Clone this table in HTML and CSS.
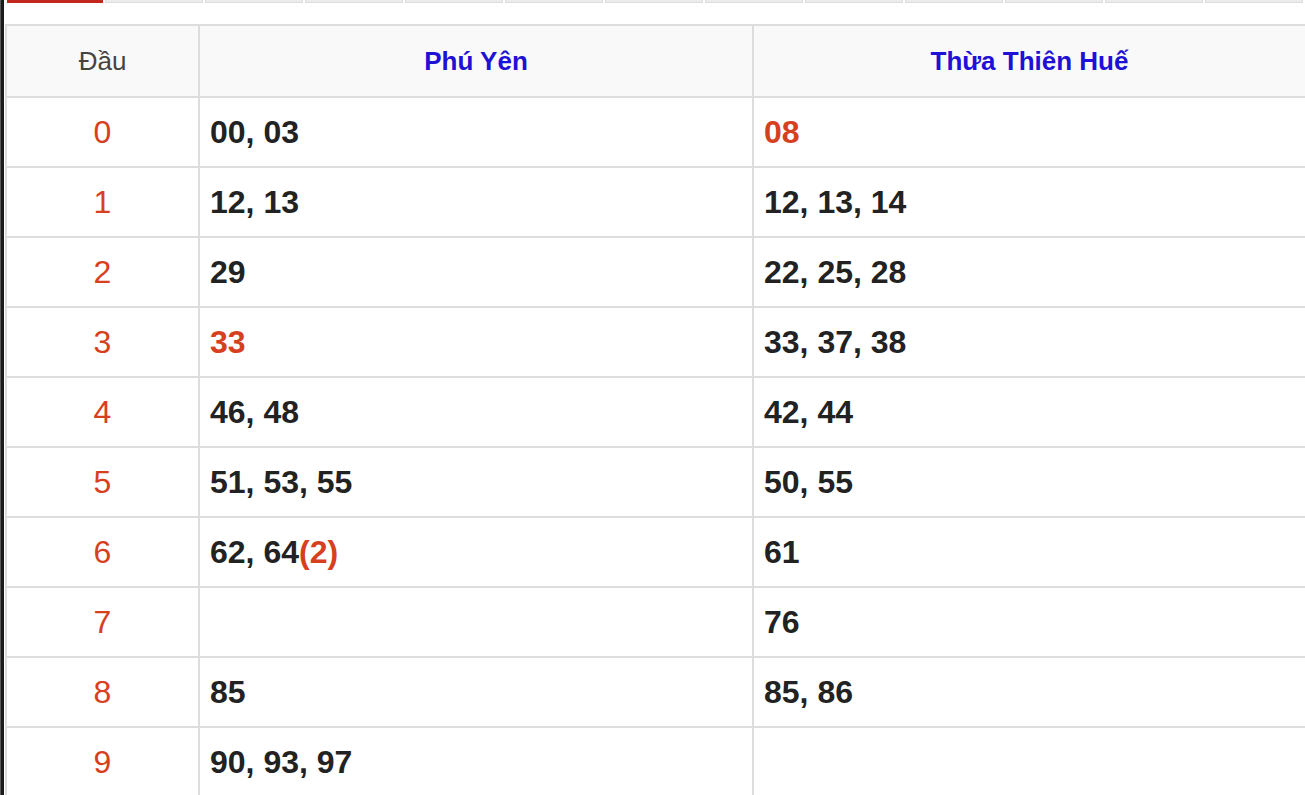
FILE: index.html
```html
<!DOCTYPE html>
<html lang="vi">
<head>
<meta charset="utf-8">
<title>Lô tô đầu</title>
<link rel="stylesheet" href="styles.css">
</head>
<body>
<div class="frame">
  <div class="edge"></div>
  <div class="main">
    <div class="tabs">
      <span class="tab active"></span>
      <span class="tab"></span>
      <span class="tab"></span>
      <span class="tab"></span>
      <span class="tab"></span>
      <span class="tab"></span>
      <span class="tab"></span>
      <span class="tab"></span>
      <span class="tab"></span>
      <span class="tab"></span>
      <span class="tab"></span>
      <span class="tab"></span>
      <span class="tab"></span>
    </div>
    <table class="loto">
      <thead>
        <tr>
          <th class="c-head">Đầu</th>
          <th class="c-prov">Phú Yên</th>
          <th class="c-prov c-last">Thừa Thiên Huế</th>
        </tr>
      </thead>
      <tbody>
        <tr><td class="c-head">0</td><td class="c-num">00, 03</td><td class="c-num"><span class="hl">08</span></td></tr>
        <tr><td class="c-head">1</td><td class="c-num">12, 13</td><td class="c-num">12, 13, 14</td></tr>
        <tr><td class="c-head">2</td><td class="c-num">29</td><td class="c-num">22, 25, 28</td></tr>
        <tr><td class="c-head">3</td><td class="c-num"><span class="hl">33</span></td><td class="c-num">33, 37, 38</td></tr>
        <tr><td class="c-head">4</td><td class="c-num">46, 48</td><td class="c-num">42, 44</td></tr>
        <tr><td class="c-head">5</td><td class="c-num">51, 53, 55</td><td class="c-num">50, 55</td></tr>
        <tr><td class="c-head">6</td><td class="c-num">62, 64<span class="hl">(2)</span></td><td class="c-num">61</td></tr>
        <tr><td class="c-head">7</td><td class="c-num"></td><td class="c-num">76</td></tr>
        <tr><td class="c-head">8</td><td class="c-num">85</td><td class="c-num">85, 86</td></tr>
        <tr><td class="c-head">9</td><td class="c-num">90, 93, 97</td><td class="c-num"></td></tr>
      </tbody>
    </table>
  </div>
</div>
</body>
</html>
```

FILE: styles.css
```css
html, body {
  margin: 0;
  padding: 0;
  overflow: hidden;
  background: #fff;
}

body {
  font-family: "Liberation Sans", Arial, Helvetica, sans-serif;
  color: #222;
}

.frame {
  display: flex;
  min-height: 795px;
}

.edge {
  flex: 0 0 4px;
  background: linear-gradient(to right, #5a5a5a 0 1px, #1b1b1b 1px 4px);
}

.main {
  flex: 1 1 auto;
  padding-left: 1px;
  min-width: 0;
}

.tabs {
  display: flex;
  gap: 2px;
  padding-left: 2px;
  height: 3px;
  overflow: hidden;
}

.tab {
  flex: 0 0 98px;
  box-sizing: border-box;
  height: 3px;
  background: #ececec;
  border: 1px solid #dcdcdc;
  border-top: 0;
}

.tab.active {
  flex-basis: 96px;
  background: #c3281f;
  border: 0;
}

.loto {
  margin-top: 21px;
  width: 1302px;
  table-layout: fixed;
  border-collapse: separate;
  border-spacing: 0;
  border-top: 2px solid #dddddd;
  border-left: 2px solid #dddddd;
}

.loto th,
.loto td {
  box-sizing: border-box;
  padding: 0;
  border-right: 2px solid #dddddd;
  border-bottom: 2px solid #dddddd;
  vertical-align: middle;
}

.loto th {
  height: 72px;
  background: #f9f9f9;
  font-size: 26px;
  font-weight: bold;
  text-align: center;
}

.loto td {
  height: 70px;
  font-size: 32px;
}

.loto th.c-head {
  width: 193px;
  font-weight: normal;
  color: #444;
}

.loto th.c-prov {
  width: 554px;
  color: #1e10d6;
}

.loto th.c-last {
  width: 553px;
}

.loto td.c-head {
  text-align: center;
  color: #d6401e;
}

.loto td.c-num {
  padding-left: 10px;
  font-weight: bold;
  color: #222;
}

.hl {
  color: #d6401e;
}
```
